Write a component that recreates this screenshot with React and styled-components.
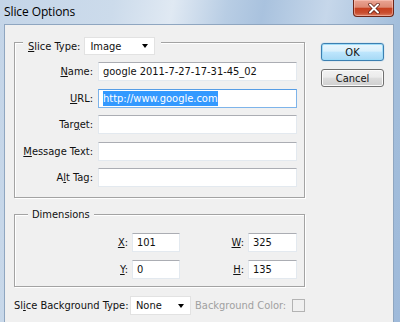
import React from "react";
import styled, { createGlobalStyle } from "styled-components";

const Global = createGlobalStyle`
  html, body { margin: 0; padding: 0; }
  body { width: 400px; height: 322px; overflow: hidden; background: #fff; }
`;

const UI_FONT = `"DejaVu Sans Condensed", "DejaVu Sans", "Liberation Sans", sans-serif`;

const Window = styled.div`
  width: 400px;
  height: 322px;
  display: flex;
  flex-direction: column;
  background: linear-gradient(100deg, #c4d5e8 0%, #ccdbeb 25%, #e0e9f3 38%, #b8cde4 50%, #a9c2de 58%, #c6d7ea 72%, #a3bedb 88%, #9fbada 100%);
  font-family: ${UI_FONT};
  font-size: 11px;
  color: #111;
`;

const TitleBar = styled.div`
  height: 24px;
  display: flex;
  align-items: flex-start;
  padding: 0 6px 0 4px;
  flex-shrink: 0;
`;

const Title = styled.div`
  font-family: "Open Sans", "Noto Sans", sans-serif;
  font-size: 12px;
  line-height: 24px;
  color: #000;
  flex: 1;
  letter-spacing: -0.1px;
`;

const CloseButton = styled.div`
  width: 41px;
  height: 17px;
  box-sizing: border-box;
  border: 1px solid #6d2618;
  border-top: none;
  border-radius: 0 0 4px 4px;
  background: linear-gradient(180deg, #eaa493 0%, #dd8a74 45%, #c7401f 52%, #c94e30 80%, #dc7e62 100%);
  box-shadow: inset 0 0 0 1px rgba(255, 210, 200, 0.5);
  display: flex;
  align-items: center;
  justify-content: center;
`;

const Frame = styled.div`
  flex: 1;
  display: flex;
  padding: 0 6px 0 4px;
  min-height: 0;
`;

const Body = styled.div`
  flex: 1;
  background: #f0f0f0;
  border: 1px solid #8fa6c0;
  border-bottom: none;
  display: flex;
  padding-left: 9px;
  box-sizing: border-box;
`;

const MainColumn = styled.div`
  width: 291px;
  padding-top: 17px;
  display: flex;
  flex-direction: column;
`;

const ButtonColumn = styled.div`
  margin-left: 16px;
  padding-top: 18px;
  display: flex;
  flex-direction: column;
  gap: 8px;
`;

const Button = styled.div`
  width: 63px;
  height: 18px;
  box-sizing: border-box;
  border-radius: 3px;
  display: flex;
  align-items: center;
  justify-content: center;
  font-size: 11px;
  border: 1px solid ${(p) => (p.$default ? "#3c7fb1" : "#707070")};
  background: ${(p) =>
    p.$default
      ? "linear-gradient(180deg, #eaf6fd 0%, #d9f0fc 45%, #bee6fd 50%, #a7d9f5 100%)"
      : "linear-gradient(180deg, #f2f2f2 0%, #ebebeb 45%, #dddddd 50%, #cfcfcf 100%)"};
  box-shadow: ${(p) =>
    p.$default ? "inset 0 0 0 1px #9fdcf8, 0 0 1px #48a6e0" : "inset 0 0 0 1px #fbfbfb"};
`;

const Group = styled.div`
  border: 1px solid #a3a3a3;
  box-shadow: inset 1px 1px 0 #fff, 1px 1px 0 #fff;
  padding: ${(p) => p.$pad};
  margin-top: ${(p) => p.$mt || "0"};
`;

const Legend = styled.div`
  display: flex;
  align-items: center;
  gap: 4px;
  width: fit-content;
  background: #f0f0f0;
  height: ${(p) => p.$h}px;
  margin: ${(p) => p.$m};
  padding: ${(p) => p.$p};
`;

const FieldGrid = styled.div`
  display: grid;
  grid-template-columns: 78px 199px;
  column-gap: 5px;
  row-gap: 7.5px;
  align-items: center;
  margin-top: 7px;
`;

const DimGrid = styled.div`
  display: grid;
  grid-template-columns: 113px 48px 60px 49px;
  column-gap: 4px;
  row-gap: 8px;
  align-items: center;
  margin-top: 12px;
`;

const Label = styled.div`
  text-align: right;
  white-space: nowrap;
`;

const Key = styled.span`
  text-decoration: underline;
  text-underline-offset: 1px;
`;

const TextBox = styled.div`
  height: 19px;
  box-sizing: border-box;
  background: #fff;
  border: 1px solid ${(p) => (p.$focus ? "#7eb4ea" : "#e3e9ef")};
  border-top-color: ${(p) => (p.$focus ? "#569de5" : "#abadb3")};
  display: flex;
  align-items: center;
  padding-left: 4px;
  white-space: nowrap;
  overflow: hidden;
`;

const Selected = styled.span`
  background: #3399ff;
  color: #fff;
  padding: 1px 0;
`;

const Select = styled.div`
  width: ${(p) => p.$w}px;
  height: ${(p) => p.$h || 18}px;
  box-sizing: border-box;
  background: #fff;
  border: 1px solid #e2e2e2;
  display: flex;
  align-items: center;
  justify-content: space-between;
  padding: 0 6px 0 5px;
`;

const Arrow = styled.span`
  width: 0;
  height: 0;
  border-left: 3.5px solid transparent;
  border-right: 3.5px solid transparent;
  border-top: 4px solid #000;
`;

const BottomRow = styled.div`
  display: flex;
  align-items: center;
  margin-top: 9px;
`;

const BottomLabel = styled.div`
  width: 118px;
  white-space: nowrap;
`;

const DisabledLabel = styled.div`
  color: #a0a0a0;
  margin-left: 4px;
  white-space: nowrap;
`;

const Swatch = styled.div`
  width: 13px;
  height: 13px;
  box-sizing: border-box;
  border: 1px solid #b3b3b3;
  margin-left: 6px;
`;

const fields = [
  { key: "N", rest: "ame:", value: "google 2011-7-27-17-31-45_02" },
  { key: "U", rest: "RL:", value: "http://www.google.com", focus: true },
  { pre: "Tar", key: "g", rest: "et:", value: "" },
  { key: "M", rest: "essage Text:", value: "" },
  { pre: "A", key: "l", rest: "t Tag:", value: "" },
];

export default function App() {
  return (
    <>
      <Global />
      <Window>
        <TitleBar>
          <Title>Slice Options</Title>
          <CloseButton>
            <svg width="14" height="11" viewBox="0 0 14 11">
              <path d="M3 1.5 L11 9.5 M11 1.5 L3 9.5" stroke="#5a1a10" strokeWidth="3.4" strokeLinecap="round" />
              <path d="M3 1.5 L11 9.5 M11 1.5 L3 9.5" stroke="#ffffff" strokeWidth="2" strokeLinecap="round" />
            </svg>
          </CloseButton>
        </TitleBar>
        <Frame>
          <Body>
            <MainColumn>
              <Group $pad="0 6px 10px 0">
                <Legend $h={18} $m="-6px 0 0 8px" $p="0 6px 0 5px">
                  <span>
                    <Key>S</Key>lice Type:
                  </span>
                  <Select $w={71}>
                    <span>Image</span>
                    <Arrow />
                  </Select>
                </Legend>
                <FieldGrid>
                  {fields.map((f) => (
                    <React.Fragment key={f.rest}>
                      <Label>
                        {f.pre}
                        <Key>{f.key}</Key>
                        {f.rest}
                      </Label>
                      <TextBox $focus={f.focus}>
                        {f.focus ? <Selected>{f.value}</Selected> : f.value}
                      </TextBox>
                    </React.Fragment>
                  ))}
                </FieldGrid>
              </Group>
              <Group $pad="0 7px 7px 0" $mt="16px">
                <Legend $h={14} $m="-8px 0 0 13px" $p="0 4px">
                  <span>Dimensions</span>
                </Legend>
                <DimGrid>
                  <Label>
                    <Key>X</Key>:
                  </Label>
                  <TextBox>101</TextBox>
                  <Label>
                    <Key>W</Key>:
                  </Label>
                  <TextBox>325</TextBox>
                  <Label>
                    <Key>Y</Key>:
                  </Label>
                  <TextBox>0</TextBox>
                  <Label>
                    <Key>H</Key>:
                  </Label>
                  <TextBox>135</TextBox>
                </DimGrid>
              </Group>
              <BottomRow>
                <BottomLabel>
                  Sl<Key>i</Key>ce Background Type:
                </BottomLabel>
                <Select $w={62} $h={19}>
                  <span>None</span>
                  <Arrow />
                </Select>
                <DisabledLabel>Background Color:</DisabledLabel>
                <Swatch />
              </BottomRow>
            </MainColumn>
            <ButtonColumn>
              <Button $default>OK</Button>
              <Button>Cancel</Button>
            </ButtonColumn>
          </Body>
        </Frame>
      </Window>
    </>
  );
}
